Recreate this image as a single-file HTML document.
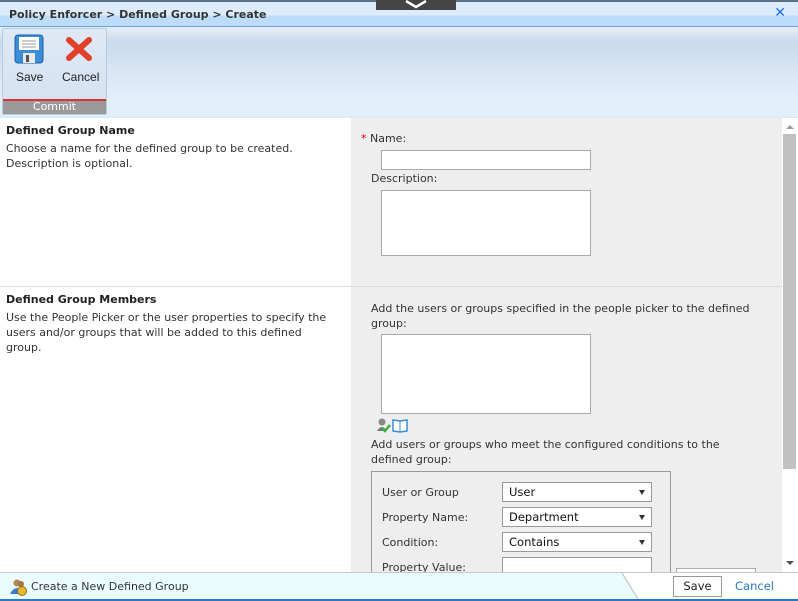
<!DOCTYPE html>
<html><head><style>
*{margin:0;padding:0;box-sizing:border-box}
body{width:798px;height:601px;overflow:hidden;font-family:"DejaVu Sans","Liberation Sans",sans-serif;font-size:11px;color:#333;background:#fff;position:relative}
.abs{position:absolute}
.title{left:0;top:0;width:798px;height:27px;background:linear-gradient(#dcecfc 0,#dcecfc 13px,#bcdcfa 14px,#bcdcfa 100%);border-top:2px solid #5a6e84;border-bottom:1px solid #6fa0d8}
.title b{position:absolute;left:9px;top:6px;font-size:11px;color:#333}
.tab{left:376px;top:0;width:80px;height:10px;background:#444}
.ribbon{left:0;top:27px;width:798px;height:91px;background:linear-gradient(#e6eef8 0,#c9dbee 15px,#d6e4f3 40px,#e2eefa 70px,#e2eefa 100%);border-bottom:1px solid #cfeff4}
.grp{left:2px;top:28px;width:105px;height:87px;border:1px solid #b8cbe0;border-radius:2px;background:linear-gradient(#dfe9f5,#d2e1f1)}
.commit{left:3px;top:99px;width:103px;height:15px;background:#9a9a9a;border-top:2px solid #e03030;color:#fff;text-align:center;font-size:11px;line-height:12px}
.lbl{font-family:"Liberation Sans",sans-serif;font-size:12px;color:#222}
.right{left:351px;top:118px;width:431px;height:454px;background:#eee}
.sb{left:782px;top:118px;width:16px;height:454px;background:#fff}
.thumb{left:783px;top:134px;width:13px;height:335px;background:#c1c1c1}
h3{font-size:11px;font-weight:bold;color:#222}
p{line-height:15px}
input,.box{background:#fff;border:1px solid #a9a9a9}
.sel{position:absolute;left:502px;width:150px;height:20px;background:#fff;border:1px solid #999;font-size:11.5px;padding:2px 6px;color:#111}
.sel:after{content:"";position:absolute;right:6px;top:7px;border-left:3.5px solid transparent;border-right:3.5px solid transparent;border-top:5px solid #333}
.footer{left:0;top:572px;width:798px;height:29px;background:#fff;border-top:1px solid #c8c8c8;border-bottom:2px solid #2a78c0}
</style></head><body>
<div class="abs title"><b>Policy Enforcer &gt; Defined Group &gt; Create</b><span style="position:absolute;right:12px;top:3px;color:#1a6fe0;font-weight:bold;font-size:14px">✕</span></div>
<div class="abs tab"><svg width="80" height="10"><path d="M30 1 L40 7 L50 1" stroke="#fff" stroke-width="2.5" fill="none"/></svg></div>
<div class="abs ribbon"></div>
<div class="abs grp"></div>
<svg class="abs" style="left:14px;top:34px" width="30" height="30"><rect x="1" y="1" width="28" height="28" rx="3" fill="#3a8ed8" stroke="#1d5fa8"/><rect x="5" y="3" width="20" height="13" fill="#fff"/><line x1="8" y1="7" x2="22" y2="7" stroke="#999"/><line x1="8" y1="10" x2="22" y2="10" stroke="#999"/><line x1="8" y1="13" x2="22" y2="13" stroke="#999"/><rect x="9" y="19" width="12" height="10" fill="#e8e8e8"/><rect x="12" y="21" width="3" height="7" fill="#555"/></svg>
<svg class="abs" style="left:65px;top:36px" width="28" height="26"><path d="M4 4 L24 22 M24 4 L4 22" stroke="#e0402a" stroke-width="6" stroke-linecap="round"/></svg>
<div class="abs lbl" style="left:16px;top:70px">Save</div>
<div class="abs lbl" style="left:62px;top:70px">Cancel</div>
<div class="abs commit">Commit</div>

<div class="abs right"></div>
<div class="abs" style="left:0;top:286px;width:782px;height:1px;background:#ddd"></div>
<div class="abs sb"></div>
<div class="abs thumb"></div>
<svg class="abs" style="left:784px;top:123px" width="12" height="8"><path d="M2 6 L6 2 L10 6Z" fill="#a0a0a0"/></svg>
<svg class="abs" style="left:784px;top:559px" width="12" height="8"><path d="M2 2 L6 6 L10 2Z" fill="#505050"/></svg>

<div class="abs" style="left:6px;top:124px;width:330px"><h3>Defined Group Name</h3><p style="margin-top:4px">Choose a name for the defined group to be created. Description is optional.</p></div>
<div class="abs" style="left:361px;top:132px"><span style="color:#e00">*</span> Name:</div>
<div class="abs box" style="left:381px;top:150px;width:210px;height:20px"></div>
<div class="abs" style="left:371px;top:172px">Description:</div>
<div class="abs box" style="left:381px;top:190px;width:210px;height:66px"></div>

<div class="abs" style="left:6px;top:293px;width:330px"><h3>Defined Group Members</h3><p style="margin-top:4px">Use the People Picker or the user properties to specify the users and/or groups that will be added to this defined group.</p></div>
<p class="abs" style="left:371px;top:301px;width:390px">Add the users or groups specified in the people picker to the defined group:</p>
<div class="abs box" style="left:381px;top:334px;width:210px;height:80px"></div>
<svg class="abs" style="left:376px;top:417px" width="34" height="16"><circle cx="6" cy="5" r="3.5" fill="#888"/><path d="M1 14 Q6 6 11 14Z" fill="#777"/><path d="M6 11 L9 14 L14 8" stroke="#3ab03a" stroke-width="2.5" fill="none"/><path d="M17 3 L24 4 L31 3 L31 14 L24 15 L17 14Z" fill="#fff" stroke="#3a8ed8" stroke-width="1.5"/><line x1="24" y1="4" x2="24" y2="15" stroke="#3a8ed8"/></svg>
<p class="abs" style="left:371px;top:437px;width:390px">Add users or groups who meet the configured conditions to the defined group:</p>
<div class="abs" style="left:371px;top:471px;width:300px;height:110px;border:1px solid #999"></div>
<div class="abs" style="left:382px;top:486px">User or Group</div>
<div class="abs" style="left:382px;top:511px">Property Name:</div>
<div class="abs" style="left:382px;top:536px">Condition:</div>
<div class="abs" style="left:382px;top:561px">Property Value:</div>
<div class="sel" style="top:482px">User</div>
<div class="sel" style="top:507px">Department</div>
<div class="sel" style="top:532px">Contains</div>
<div class="abs box" style="left:502px;top:557px;width:150px;height:20px;border-color:#999"></div>
<div class="abs box" style="left:676px;top:568px;width:80px;height:10px"></div>

<div class="abs footer"></div>
<svg class="abs" style="left:0;top:573px" width="640" height="26"><path d="M0 0 L622 0 L638 26 L0 26Z" fill="#ebfcfe"/><path d="M622 0 L638 26" stroke="#bbb"/></svg>
<svg class="abs" style="left:9px;top:578px" width="18" height="18"><circle cx="8" cy="5" r="3.5" fill="#b08850"/><circle cx="12" cy="6" r="3" fill="#a07840"/><path d="M1 16 Q5 8 11 11 L11 16Z" fill="#3a7ad0"/><circle cx="13" cy="13" r="4.5" fill="#e8b830" stroke="#8a6a20"/></svg>
<div class="abs" style="left:31px;top:580px;font-size:11px;color:#333">Create a New Defined Group</div>
<div class="abs" style="left:673px;top:576px;width:49px;height:21px;border:1px solid #999;background:#fff;text-align:center;line-height:19px;font-size:11.5px;color:#222">Save</div>
<div class="abs" style="left:735px;top:579px;font-size:11.5px;color:#2a78c0">Cancel</div>
</body></html>
